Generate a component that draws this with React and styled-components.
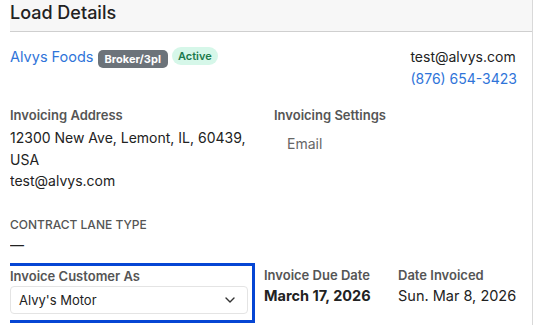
import React from 'react';
import styled, { createGlobalStyle } from 'styled-components';

const GlobalStyle = createGlobalStyle`
  html, body {
    margin: 0;
    padding: 0;
    background: #ffffff;
    font-family: Inter, "Noto Sans", "Liberation Sans", sans-serif;
    color: #222222;
  }
`;

const Panel = styled.div`
  margin-left: 10px;
  width: 523px;
  height: 325px;
  border-right: 1px solid #d9d9d9;
  box-sizing: border-box;
  overflow: hidden;
`;

const Header = styled.div`
  height: 32px;
  box-sizing: border-box;
  background: #f7f7f7;
  border-bottom: 1px solid #cfcfcf;
  font-size: 18px;
  font-weight: 500;
  line-height: 26px;
  color: #222;
`;

const Body = styled.div`
  padding: 12px 15px 0 0;
`;

const TopRow = styled.div`
  display: flex;
  justify-content: space-between;
  align-items: flex-start;
`;

const NameLine = styled.div`
  display: flex;
  align-items: center;
  gap: 4px;
  padding-top: 1px;
`;

const Link = styled.span`
  color: #2f74d9;
  font-size: 14.5px;
  line-height: 20px;
`;

const Badge = styled.span`
  font-size: 11px;
  line-height: 18px;
  padding: 0 ${p => (p.pill ? 6 : 7)}px;
  border-radius: ${p => (p.pill ? '9px' : '5px')};
  background: ${p => p.bg};
  color: ${p => p.fg};
  margin-top: ${p => (p.pill ? '-2px' : '5px')};
  font-weight: ${p => (p.pill ? 600 : 700)};
`;

const Contact = styled.div`
  display: flex;
  flex-direction: column;
  align-items: flex-start;
  font-size: 14px;
  line-height: 22px;
  margin-top: 2px;
`;

const Phone = styled.span`
  color: #2f74d9;
`;

const Grid = styled.div`
  display: grid;
  grid-template-columns: ${p => p.cols};
  column-gap: ${p => p.gap || 0}px;
  margin-top: ${p => p.mt}px;
`;

const Label = styled.div`
  line-height: 18px;
  color: #555555;
  text-transform: ${p => (p.caps ? 'uppercase' : 'none')};
  font-weight: ${p => (p.caps ? 500 : 600)};
  font-size: ${p => (p.caps ? '12px' : '13px')};
`;

const Text = styled.div`
  font-size: ${p => p.size || 14}px;
  line-height: 21.5px;
  color: ${p => p.color || '#222'};
  font-weight: ${p => (p.bold ? 700 : 400)};
  padding-left: ${p => p.indent || 0}px;
  margin-top: ${p => p.mt || 0}px;
  white-space: nowrap;
`;

const Highlight = styled.div`
  margin-left: -9px;
  border: 3px solid #0646d4;
  padding: 1px 4px 0 6px;
  height: 60px;
  box-sizing: border-box;
`;

const Select = styled.div`
  margin-top: 1px;
  height: 28px;
  box-sizing: border-box;
  border: 1px solid #e4e4e4;
  border-radius: 4px;
  display: flex;
  align-items: center;
  justify-content: space-between;
  padding: 0 12px 0 8px;
  font-size: 13px;
  color: #222;
`;

const DateCol = styled.div`
  padding-top: 3px;
`;

const Chevron = () => (
  <svg width="10" height="6" viewBox="0 0 10 6" fill="none">
    <path d="M1 1l4 4 4-4" stroke="#333" strokeWidth="1.4" strokeLinecap="round" strokeLinejoin="round" />
  </svg>
);

export default function App() {
  return (
    <>
      <GlobalStyle />
      <Panel>
        <Header>Load Details</Header>
        <Body>
          <TopRow>
            <NameLine>
              <Link>Alvys Foods</Link>
              <Badge bg="#6c737a" fg="#ffffff">Broker/3pl</Badge>
              <Badge pill bg="#d6f7e9" fg="#1b7a4c">Active</Badge>
            </NameLine>
            <Contact>
              <span>test@alvys.com</span>
              <Phone>(876) 654-3423</Phone>
            </Contact>
          </TopRow>

          <Grid cols="264px 1fr" mt={16}>
            <div>
              <Label>Invoicing Address</Label>
              <Text mt={3}>12300 New Ave, Lemont, IL, 60439,<br />USA<br />test@alvys.com</Text>
            </div>
            <div>
              <Label>Invoicing Settings</Label>
              <Text indent={13} mt={9} color="#666">Email</Text>
            </div>
          </Grid>

          <Grid cols="1fr" mt={24}>
            <Label caps>Contract Lane Type</Label>
            <Text>—</Text>
          </Grid>

          <Grid cols="245px 125px 1fr" gap={9} mt={8}>
            <Highlight>
              <Label>Invoice Customer As</Label>
              <Select>
                <span>Alvy's Motor</span>
                <Chevron />
              </Select>
            </Highlight>
            <DateCol>
              <Label>Invoice Due Date</Label>
              <Text bold size={14.5} mt={1}>March 17, 2026</Text>
            </DateCol>
            <DateCol>
              <Label>Date Invoiced</Label>
              <Text size={14.5} mt={1}>Sun. Mar 8, 2026</Text>
            </DateCol>
          </Grid>
        </Body>
      </Panel>
    </>
  );
}
